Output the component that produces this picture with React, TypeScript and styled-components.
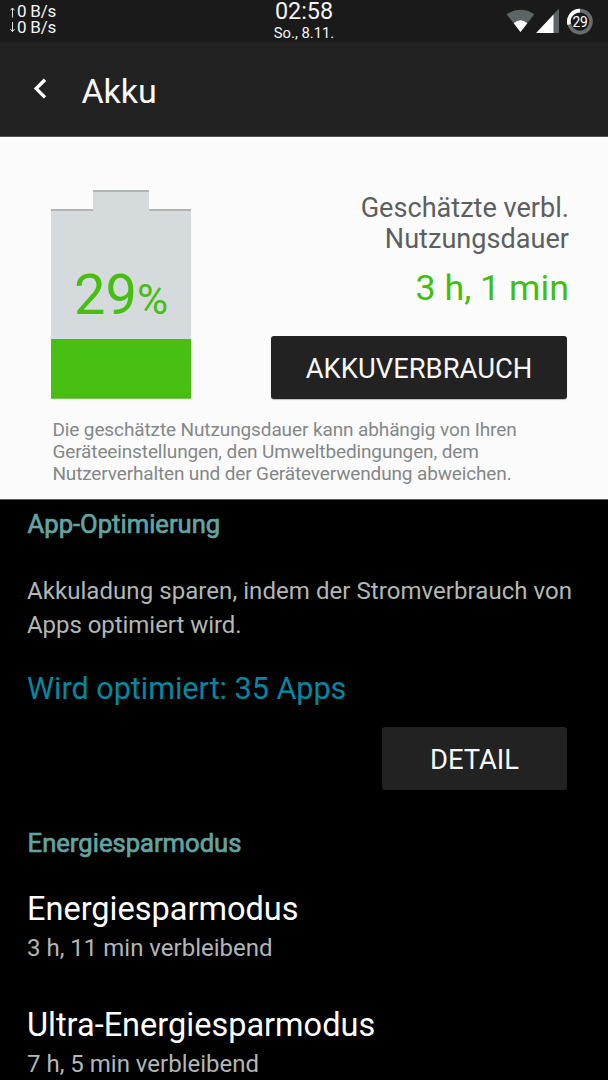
import React from "react";
import styled, { createGlobalStyle } from "styled-components";

const Global = createGlobalStyle`
  * { box-sizing: border-box; }
  html, body { margin: 0; padding: 0; background: #000; overflow: hidden; }
  body { font-family: Roboto, "Liberation Sans", sans-serif; }
`;

const Screen = styled.div`
  width: 608px;
  height: 1080px;
  overflow: hidden;
  background: #000;
`;

const StatusBar = styled.header`
  display: grid;
  grid-template-columns: 1fr auto 1fr;
  height: 42px;
  padding: 0 9px;
  background: #1a1a1a;
  color: #f4f4f4;
`;

const Text = styled.div<{ $size: number; $line: number; $track?: number }>`
  font-size: ${(p) => p.$size}px;
  line-height: ${(p) => p.$line}px;
  letter-spacing: ${(p) => p.$track ?? 0}px;
  white-space: nowrap;
`;

const NetSpeed = styled.div`
  padding-top: 4px;
`;

const SpeedRow = styled.div`
  display: flex;
  align-items: center;
  gap: 1px;
  height: 15.5px;
`;

const Clock = styled.div`
  text-align: center;
`;

const StatusIcons = styled.div`
  display: flex;
  justify-content: flex-end;
  align-items: flex-start;
  padding: 7px 6px 0 0;
`;

const TitleBar = styled.div`
  display: flex;
  align-items: center;
  height: 95px;
  padding-left: 33px;
  gap: 34.4px;
  background: #222;
  color: #fafafa;
  border-bottom: 1px solid #555152;
`;

const Title = styled(Text)`
  padding-top: 3px;
`;

const Summary = styled.section`
  height: 363px;
  padding: 53px 39px 0 51px;
  background: #fbfbfb;
  border-bottom: 1px solid #5e6463;
`;

const SummaryTop = styled.div`
  display: flex;
  justify-content: space-between;
  height: 209px;
`;

const Battery = styled.div`
  width: 140px;
  height: 209px;
  display: flex;
  flex-direction: column;
  align-items: center;
`;

const BatteryCap = styled.div`
  width: 56px;
  height: 21px;
  margin-bottom: -2px;
  z-index: 1;
  background: #d5dbdd;
  border-top: 2px solid #b1b5b5;
`;

const BatteryBody = styled.div`
  width: 140px;
  flex: 1;
  display: flex;
  flex-direction: column;
  background: #d5dbdd;
  border-top: 2px solid #b1b5b5;
`;

const Percent = styled.div`
  flex: 1;
  display: flex;
  align-items: baseline;
  justify-content: center;
  padding-top: 52px;
  color: #46be12;
`;

const BatteryFill = styled.div`
  height: 60px;
  background: #46be12;
  border-bottom: 1px solid #6ccb45;
`;

const Estimate = styled.div`
  width: 298px;
  padding-top: 3px;
  text-align: right;
  color: #5c5f60;
`;

const Remaining = styled(Text)`
  color: #41be10;
`;

const Button = styled.button<{ $width: number }>`
  display: flex;
  align-items: center;
  justify-content: center;
  width: ${(p) => p.$width}px;
  height: 63px;
  padding: 4px 0 0;
  border: 0;
  border-radius: 3px;
  background: #222;
  color: #f8f8f8;
  font-family: inherit;
`;

const UsageButton = styled(Button)`
  margin-top: 14px;
  box-shadow: 0 1px 1px rgba(0, 0, 0, 0.25);
`;

const Note = styled.div`
  padding: 20px 0 0 1.4px;
  color: #838788;
`;

const Section = styled.section`
  padding: 0 41px 29px 27px;
`;

const SectionTitle = styled(Text)`
  padding: 0 0 2px 0.6px;
  color: #62a4a3;
  -webkit-text-stroke: 0.7px #62a4a3;
`;

const Muted = styled(Text)`
  color: #b3b7b8;
`;

const Description = styled.div`
  padding: 24px 0 17px;
`;

const Link = styled(Text)`
  color: #0288a3;
`;

const ButtonRow = styled.div`
  display: flex;
  justify-content: flex-end;
  padding-top: 8px;
`;

const ModeList = styled.div`
  padding-top: 20px;
`;

const Mode = styled.div`
  height: 115.5px;
  color: #fff;
`;

const Arrow = ({ up }: { up?: boolean }) => (
  <svg width="7" height="12" viewBox="0 0 7 12" fill="none" stroke="#e0e0e0" strokeWidth="1">
    <path d={up ? "M3.5 11.5V2M1.5 4.3L3.5 2L5.5 4.3" : "M3.5 1V10.5M1.5 8.2L3.5 10.5L5.5 8.2"} />
  </svg>
);

const modes = [
  { title: "Energiesparmodus", left: "3 h, 11 min verbleibend" },
  { title: "Ultra-Energiesparmodus", left: "7 h, 5 min verbleibend" },
];

export default function App() {
  return (
    <Screen>
      <Global />
      <StatusBar>
        <NetSpeed>
          <SpeedRow>
            <Arrow up />
            <Text $size={17} $line={15.5} $track={-0.2}>0 B/s</Text>
          </SpeedRow>
          <SpeedRow>
            <Arrow />
            <Text $size={17} $line={15.5} $track={-0.2}>0 B/s</Text>
          </SpeedRow>
        </NetSpeed>
        <Clock>
          <Text $size={23.4} $line={23}>02:58</Text>
          <Text $size={14.8} $line={20}>So., 8.11.</Text>
        </Clock>
        <StatusIcons>
          <svg width="88" height="28" viewBox="505 7 88 28">
            <path d="M506.5 14.2Q520.5 5.5 534.3 14.2L520.5 32Z" fill="#5d6465" />
            <path d="M513.7 23.2Q520.5 17.5 527.3 23.2L520.5 32Z" fill="#fff" />
            <path d="M559 8.5V33H536.2Z" fill="#5d6465" />
            <path d="M553.5 14.5V33H536.2Z" fill="#fff" />
            <circle cx="580" cy="21.6" r="11" fill="none" stroke="#666d6f" strokeWidth="3.6" />
            <path d="M569.2 24.5A11 11 0 0 1 580 10.6" fill="none" stroke="#fff" strokeWidth="3.6" />
            <text x="580" y="26.6" textAnchor="middle" fontSize="13.8" letterSpacing="-0.3" fill="#fff">29</text>
          </svg>
        </StatusIcons>
      </StatusBar>
      <TitleBar>
        <svg width="14" height="22" viewBox="0 0 14 22" fill="none" stroke="#fff" strokeWidth="3.4">
          <path d="M12 1.8L3.2 10.6L12 19.4" />
        </svg>
        <Title $size={34} $line={40}>Akku</Title>
      </TitleBar>
      <Summary>
        <SummaryTop>
          <Battery>
            <BatteryCap />
            <BatteryBody>
              <Percent>
                <Text $size={56} $line={64}>29</Text>
                <Text $size={42.5} $line={64}>%</Text>
              </Percent>
              <BatteryFill />
            </BatteryBody>
          </Battery>
          <Estimate>
            <Text $size={27.1} $line={31}>Geschätzte verbl.</Text>
            <Text $size={27.1} $line={31}>Nutzungsdauer</Text>
            <Remaining $size={35.8} $line={67}>3 h, 1 min</Remaining>
            <UsageButton $width={296}>
              <Text $size={27.4} $line={31}>AKKUVERBRAUCH</Text>
            </UsageButton>
          </Estimate>
        </SummaryTop>
        <Note>
          <Text $size={19} $line={22} $track={-0.11}>Die geschätzte Nutzungsdauer kann abhängig von Ihren</Text>
          <Text $size={19} $line={22} $track={-0.13}>Geräteeinstellungen, den Umweltbedingungen, dem</Text>
          <Text $size={19} $line={22} $track={-0.14}>Nutzerverhalten und der Geräteverwendung abweichen.</Text>
        </Note>
      </Summary>
      <Section>
        <SectionTitle $size={25.6} $line={48}>App-Optimierung</SectionTitle>
        <Description>
          <Muted $size={24} $line={34} $track={0.06}>Akkuladung sparen, indem der Stromverbrauch von</Muted>
          <Muted $size={24} $line={34} $track={-0.05}>Apps optimiert wird.</Muted>
        </Description>
        <Link $size={30.5} $line={60}>Wird optimiert: 35 Apps</Link>
        <ButtonRow>
          <Button $width={185}>
            <Text $size={27.4} $line={31}>DETAIL</Text>
          </Button>
        </ButtonRow>
      </Section>
      <Section>
        <SectionTitle $size={25.6} $line={48}>Energiesparmodus</SectionTitle>
        <ModeList>
          {modes.map((m) => (
            <Mode key={m.title}>
              <Text $size={32.5} $line={40}>{m.title}</Text>
              <Muted $size={24} $line={38}>{m.left}</Muted>
            </Mode>
          ))}
        </ModeList>
      </Section>
    </Screen>
  );
}
